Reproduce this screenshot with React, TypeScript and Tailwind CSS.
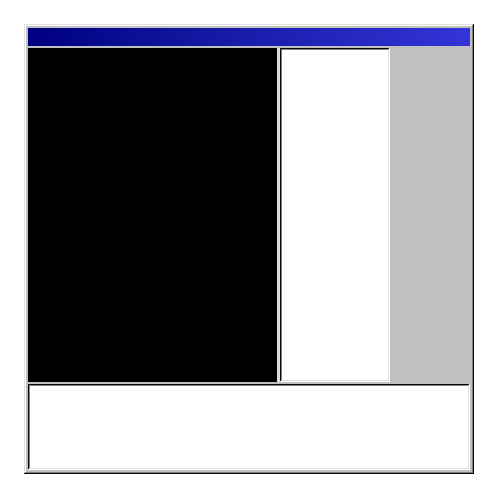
import React from 'react';

const raised =
  'shadow-[inset_-1px_-1px_#0a0a0a,inset_1px_1px_#dfdfdf,inset_-2px_-2px_#808080,inset_2px_2px_#ffffff]';
const sunken =
  'shadow-[inset_-1px_-1px_#ffffff,inset_1px_1px_#0a0a0a,inset_-2px_-2px_#dfdfdf,inset_2px_2px_#808080]';

const App: React.FC = () => {
  return (
    <div className="w-[500px] h-[500px] bg-white p-[24px]">
      <div className={`w-[450px] h-[450px] bg-[#c0c0c0] p-[4px] flex flex-col ${raised}`}>
        <div className="h-[18px] shrink-0 bg-gradient-to-r from-[#000080] to-[#3434d8]" />
        <div className="flex h-[334px] shrink-0 mt-[2px]">
          <div className="w-[249px] bg-black" />
          <div className="w-[3px] bg-[#dfdfdf]" />
          <div className={`w-[110px] bg-white ${sunken}`} />
        </div>
        <div className={`flex-1 mt-[2px] bg-white ${sunken}`} />
      </div>
    </div>
  );
};

export default App;
